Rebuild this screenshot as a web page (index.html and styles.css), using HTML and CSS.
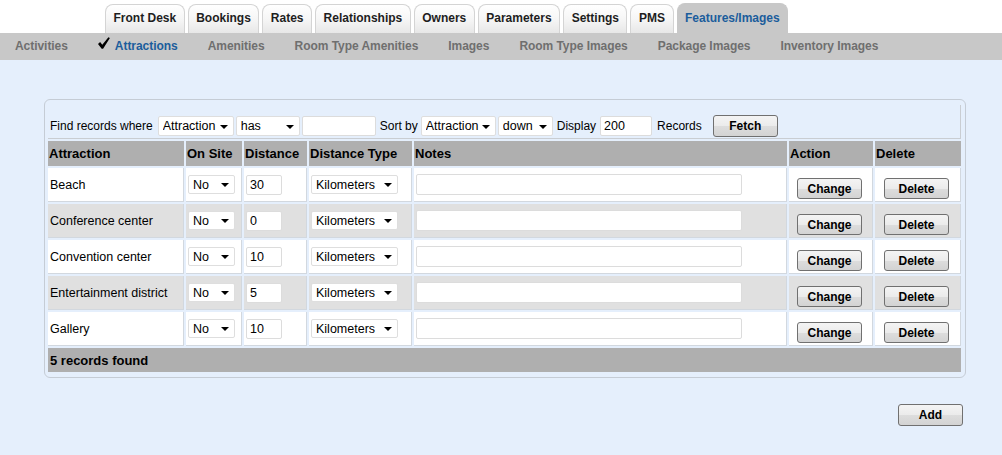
FILE: index.html
```html
<!DOCTYPE html>
<html lang="en">
<head>
<meta charset="utf-8">
<title>Features/Images - Attractions</title>
<link rel="stylesheet" href="styles.css">
</head>
<body>
<header class="topbar">
  <nav class="tabs">
    <a class="tab">Front Desk</a>
    <a class="tab">Bookings</a>
    <a class="tab">Rates</a>
    <a class="tab">Relationships</a>
    <a class="tab">Owners</a>
    <a class="tab">Parameters</a>
    <a class="tab">Settings</a>
    <a class="tab">PMS</a>
    <a class="tab tab-active">Features/Images</a>
  </nav>
</header>
<nav class="subnav">
  <a class="sub">Activities</a>
  <a class="sub sub-active"><svg class="check" viewBox="0 0 12 12" width="12" height="12"><path d="M0 6.9 L2.1 5.1 L4.3 7.7 L10.4 0.2 L11.9 1.1 L5.1 11.8 L3.7 11.8 Z" fill="#000"/></svg>Attractions</a>
  <a class="sub">Amenities</a>
  <a class="sub">Room Type Amenities</a>
  <a class="sub">Images</a>
  <a class="sub">Room Type Images</a>
  <a class="sub">Package Images</a>
  <a class="sub">Inventory Images</a>
</nav>
<main class="content">
  <div class="panel">
    <table class="grid">
      <colgroup>
        <col class="c-name"><col class="c-site"><col class="c-dist"><col class="c-type"><col class="c-notes"><col class="c-action"><col class="c-delete">
      </colgroup>
      <tr>
        <td colspan="7" class="find">
          <div class="find-bar">
            <span class="lbl">Find records where</span>
            <span class="sel sel-field"><select><option>Attraction</option></select></span>
            <span class="sel sel-op"><select><option>has</option></select></span>
            <input class="inp inp-query" type="text" value="">
            <span class="lbl lbl-sort">Sort by</span>
            <span class="sel sel-sort"><select><option>Attraction</option></select></span>
            <span class="sel sel-dir"><select><option>down</option></select></span>
            <span class="lbl lbl-display">Display</span>
            <input class="inp inp-display" type="text" value="200">
            <span class="lbl lbl-records">Records</span>
            <button class="btn btn-fetch">Fetch</button>
          </div>
        </td>
      </tr>
      <tr class="head">
        <th>Attraction</th><th>On Site</th><th>Distance</th><th>Distance Type</th><th>Notes</th><th>Action</th><th>Delete</th>
      </tr>
      <tr class="row">
        <td>Beach</td>
        <td><span class="sel sel-yn"><select><option>No</option></select></span></td>
        <td><input class="inp inp-dist" type="text" value="30"></td>
        <td><span class="sel sel-unit"><select><option>Kilometers</option></select></span></td>
        <td><input class="inp inp-notes" type="text" value=""></td>
        <td class="center"><button class="btn btn-row">Change</button></td>
        <td class="center"><button class="btn btn-row">Delete</button></td>
      </tr>
      <tr class="row alt">
        <td>Conference center</td>
        <td><span class="sel sel-yn"><select><option>No</option></select></span></td>
        <td><input class="inp inp-dist" type="text" value="0"></td>
        <td><span class="sel sel-unit"><select><option>Kilometers</option></select></span></td>
        <td><input class="inp inp-notes" type="text" value=""></td>
        <td class="center"><button class="btn btn-row">Change</button></td>
        <td class="center"><button class="btn btn-row">Delete</button></td>
      </tr>
      <tr class="row">
        <td>Convention center</td>
        <td><span class="sel sel-yn"><select><option>No</option></select></span></td>
        <td><input class="inp inp-dist" type="text" value="10"></td>
        <td><span class="sel sel-unit"><select><option>Kilometers</option></select></span></td>
        <td><input class="inp inp-notes" type="text" value=""></td>
        <td class="center"><button class="btn btn-row">Change</button></td>
        <td class="center"><button class="btn btn-row">Delete</button></td>
      </tr>
      <tr class="row alt">
        <td>Entertainment district</td>
        <td><span class="sel sel-yn"><select><option>No</option></select></span></td>
        <td><input class="inp inp-dist" type="text" value="5"></td>
        <td><span class="sel sel-unit"><select><option>Kilometers</option></select></span></td>
        <td><input class="inp inp-notes" type="text" value=""></td>
        <td class="center"><button class="btn btn-row">Change</button></td>
        <td class="center"><button class="btn btn-row">Delete</button></td>
      </tr>
      <tr class="row">
        <td>Gallery</td>
        <td><span class="sel sel-yn"><select><option>No</option></select></span></td>
        <td><input class="inp inp-dist" type="text" value="10"></td>
        <td><span class="sel sel-unit"><select><option>Kilometers</option></select></span></td>
        <td><input class="inp inp-notes" type="text" value=""></td>
        <td class="center"><button class="btn btn-row">Change</button></td>
        <td class="center"><button class="btn btn-row">Delete</button></td>
      </tr>
      <tr class="foot">
        <td colspan="7">5 records found</td>
      </tr>
    </table>
  </div>
  <div class="add-row">
    <button class="btn btn-add">Add</button>
  </div>
</main>
</body>
</html>
```

FILE: styles.css
```css
* { box-sizing: border-box; }

html, body {
  margin: 0;
  padding: 0;
  background: #ffffff;
  font-family: "Liberation Sans", Arial, sans-serif;
  color: #000;
}

/* ---------- top tabs ---------- */
.topbar {
  height: 33px;
  background: #ffffff;
  display: flex;
  align-items: flex-end;
  padding-left: 105px;
}
.tabs {
  display: flex;
  align-items: flex-end;
  gap: 3px;
}
.tab {
  height: 29px;
  padding: 6px 7.5px 0;
  border: 1px solid #d4d4d4;
  border-bottom: none;
  border-radius: 8px 8px 0 0;
  background: linear-gradient(#ffffff 0%, #f6f6f6 50%, #e7e7e7 100%);
  font-size: 12px;
  font-weight: bold;
  line-height: 15px;
  color: #1e1e1e;
  white-space: nowrap;
}
.tab-active {
  height: 30px;
  padding-top: 7px;
  background: #c8c8c8;
  border-color: #c8c8c8;
  color: #1b5d9c;
}

/* ---------- sub navigation ---------- */
.subnav {
  height: 27px;
  background: #c8c8c8;
  display: flex;
  align-items: center;
  gap: 30px;
  padding-left: 15px;
}
.sub {
  font-size: 12px;
  font-weight: bold;
  letter-spacing: -0.05px;
  color: #6f6f6f;
  white-space: nowrap;
  line-height: 15px;
  display: flex;
  align-items: flex-start;
}
.sub-active {
  color: #1b5d9c;
}
.check {
  width: 12px;
  height: 12px;
  margin-right: 5px;
  margin-top: -2px;
}

/* ---------- content ---------- */
.content {
  background: #e5effc;
  min-height: calc(100vh - 60px);
  padding: 39px 36px 0 44px;
}
.panel {
  border: 1px solid #c5ccd5;
  border-radius: 6px;
  padding: 3px 2px 3px 1px;
}
.grid {
  width: 100%;
  table-layout: fixed;
  border-collapse: separate;
  border-spacing: 2px;
  font-size: 12.5px;
}
.c-name { width: 136px; }
.c-site { width: 56px; }
.c-dist { width: 63px; }
.c-type { width: 103px; }
.c-notes { width: 373px; }
.c-action { width: 84px; }
.c-delete { width: 86px; }

.find {
  height: 34px;
  padding: 0 2px 1px;
  vertical-align: bottom;
  border-right: 1px solid #c9cdd2;
  border-bottom: 1px solid #c9cdd2;
}
.find-bar {
  display: flex;
  align-items: center;
  white-space: nowrap;
}
.lbl { font-size: 12px; }
.find-bar .sel-field { margin-left: 5px; }
.find-bar .sel-op { margin-left: 2px; }
.find-bar .inp-query { margin-left: 2px; }
.lbl-sort { margin-left: 4px; }
.find-bar .sel-sort { margin-left: 3px; }
.find-bar .sel-dir { margin-left: 2px; }
.lbl-display { margin-left: 4px; }
.find-bar .inp-display { margin-left: 4px; }
.lbl-records { margin-left: 5px; }
.btn-fetch { margin-left: 11px; }

/* select lookalike */
.sel {
  position: relative;
  display: inline-block;
  height: 20px;
  vertical-align: middle;
}
.sel select {
  -webkit-appearance: none;
  appearance: none;
  width: 100%;
  height: 100%;
  margin: 0;
  border: 1px solid #dedede;
  border-radius: 2px;
  background: #ffffff;
  padding: 0 14px 0 4px;
  font-family: "Liberation Sans", Arial, sans-serif;
  font-size: 12.5px;
  color: #000;
}
.sel::after {
  content: "";
  position: absolute;
  right: 6px;
  top: 9px;
  border-left: 4px solid transparent;
  border-right: 4px solid transparent;
  border-top: 4px solid #000;
  pointer-events: none;
}
.sel-field { width: 76px; }
.sel-op { width: 64px; }
.sel-sort { width: 75px; }
.sel-dir { width: 55px; }
.sel-yn { width: 47px; height: 19px; }
.sel-yn::after { top: 8px; }
.sel-unit { width: 87px; height: 19px; }
.sel-unit::after { top: 8px; }

.inp {
  height: 20px;
  margin: 0;
  border: 1px solid #dcdcdc;
  border-radius: 2px;
  background: #ffffff;
  padding: 0 3px;
  font-family: "Liberation Sans", Arial, sans-serif;
  font-size: 12.5px;
  color: #000;
  vertical-align: middle;
}
.inp-query { width: 74px; }
.inp-display { width: 52px; }
.inp-dist { width: 36px; }
.inp-notes { width: 326px; height: 21px; }

/* table rows */
.head th {
  height: 25px;
  background: #afafaf;
  font-size: 13px;
  font-weight: bold;
  text-align: left;
  padding: 0 1px;
  white-space: nowrap;
}
.row td {
  height: 34px;
  background: #ffffff;
  padding: 0 1px 0 2px;
  border-right: 1px solid #d2d8df;
  border-bottom: 1px solid #d2d8df;
  vertical-align: middle;
  white-space: nowrap;
}
.row.alt td { background: #e0e0e0; }
.row td.center { text-align: center; }
.foot td {
  height: 24px;
  background: #afafaf;
  font-size: 13px;
  font-weight: bold;
  padding: 0 2px;
}

/* buttons */
.btn {
  width: 65px;
  height: 22px;
  padding: 0;
  border: 1px solid #707070;
  border-radius: 3px;
  background: linear-gradient(#f4f4f4 0%, #ebebeb 50%, #dddddd 51%, #d3d3d3 100%);
  font-family: "Liberation Sans", Arial, sans-serif;
  font-size: 12px;
  font-weight: bold;
  color: #000;
}
.btn-row {
  height: 21px;
  margin-top: 8px;
  vertical-align: middle;
}
.row td.center .btn-row { margin-left: -3px; }
.add-row {
  display: flex;
  justify-content: flex-end;
  padding: 26px 3px 0 0;
}
```
